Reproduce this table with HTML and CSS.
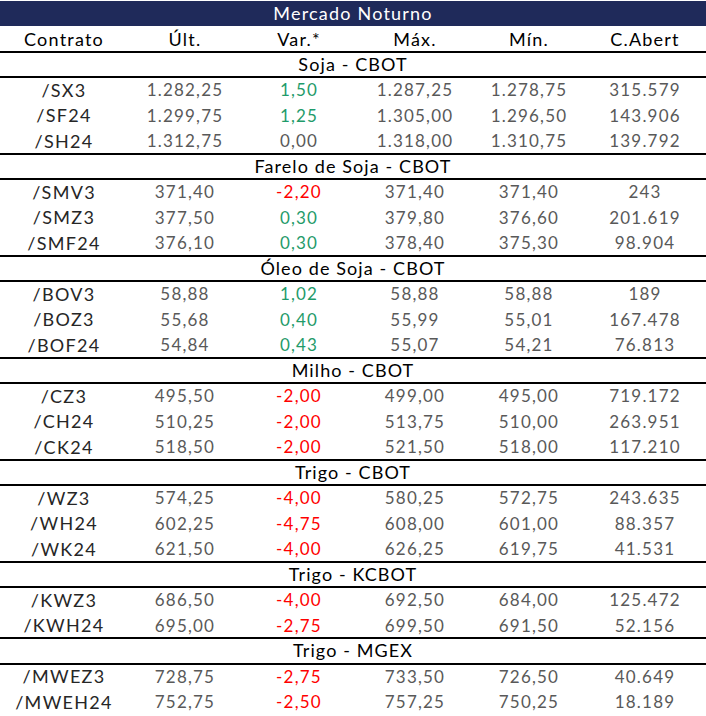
FILE: index.html
```html
<!DOCTYPE html>
<html lang="pt-BR">
<head>
<meta charset="utf-8">
<title>Mercado Noturno</title>
<link rel="stylesheet" href="styles.css">
</head>
<body>
<div class="board">
  <div class="title">Mercado Noturno</div>
  <div class="row head"><span>Contrato</span><span>Últ.</span><span>Var.*</span><span>Máx.</span><span>Mín.</span><span>C.Abert</span></div>

  <div class="group">Soja - CBOT</div>
  <div class="row"><span class="c">/SX3</span><span>1.282,25</span><span class="up">1,50</span><span>1.287,25</span><span>1.278,75</span><span>315.579</span></div>
  <div class="row"><span class="c">/SF24</span><span>1.299,75</span><span class="up">1,25</span><span>1.305,00</span><span>1.296,50</span><span>143.906</span></div>
  <div class="row"><span class="c">/SH24</span><span>1.312,75</span><span>0,00</span><span>1.318,00</span><span>1.310,75</span><span>139.792</span></div>

  <div class="group">Farelo de Soja - CBOT</div>
  <div class="row"><span class="c">/SMV3</span><span>371,40</span><span class="dn">-2,20</span><span>371,40</span><span>371,40</span><span>243</span></div>
  <div class="row"><span class="c">/SMZ3</span><span>377,50</span><span class="up">0,30</span><span>379,80</span><span>376,60</span><span>201.619</span></div>
  <div class="row"><span class="c">/SMF24</span><span>376,10</span><span class="up">0,30</span><span>378,40</span><span>375,30</span><span>98.904</span></div>

  <div class="group">Óleo de Soja - CBOT</div>
  <div class="row"><span class="c">/BOV3</span><span>58,88</span><span class="up">1,02</span><span>58,88</span><span>58,88</span><span>189</span></div>
  <div class="row"><span class="c">/BOZ3</span><span>55,68</span><span class="up">0,40</span><span>55,99</span><span>55,01</span><span>167.478</span></div>
  <div class="row"><span class="c">/BOF24</span><span>54,84</span><span class="up">0,43</span><span>55,07</span><span>54,21</span><span>76.813</span></div>

  <div class="group">Milho - CBOT</div>
  <div class="row"><span class="c">/CZ3</span><span>495,50</span><span class="dn">-2,00</span><span>499,00</span><span>495,00</span><span>719.172</span></div>
  <div class="row"><span class="c">/CH24</span><span>510,25</span><span class="dn">-2,00</span><span>513,75</span><span>510,00</span><span>263.951</span></div>
  <div class="row"><span class="c">/CK24</span><span>518,50</span><span class="dn">-2,00</span><span>521,50</span><span>518,00</span><span>117.210</span></div>

  <div class="group">Trigo - CBOT</div>
  <div class="row"><span class="c">/WZ3</span><span>574,25</span><span class="dn">-4,00</span><span>580,25</span><span>572,75</span><span>243.635</span></div>
  <div class="row"><span class="c">/WH24</span><span>602,25</span><span class="dn">-4,75</span><span>608,00</span><span>601,00</span><span>88.357</span></div>
  <div class="row"><span class="c">/WK24</span><span>621,50</span><span class="dn">-4,00</span><span>626,25</span><span>619,75</span><span>41.531</span></div>

  <div class="group">Trigo - KCBOT</div>
  <div class="row"><span class="c">/KWZ3</span><span>686,50</span><span class="dn">-4,00</span><span>692,50</span><span>684,00</span><span>125.472</span></div>
  <div class="row"><span class="c">/KWH24</span><span>695,00</span><span class="dn">-2,75</span><span>699,50</span><span>691,50</span><span>52.156</span></div>

  <div class="group">Trigo - MGEX</div>
  <div class="row"><span class="c">/MWEZ3</span><span>728,75</span><span class="dn">-2,75</span><span>733,50</span><span>726,50</span><span>40.649</span></div>
  <div class="row"><span class="c">/MWEH24</span><span>752,75</span><span class="dn">-2,50</span><span>757,25</span><span>750,25</span><span>18.189</span></div>
</div>
</body>
</html>
```
FILE: styles.css
```css
html, body {
  margin: 0;
  padding: 0;
  background: #ffffff;
}
.board {
  width: 706px;
  font-family: Lato, "Open Sans", sans-serif;
}
.title {
  height: 25px;
  margin-top: 1px;
  background: #1f2a5a;
  color: #ffffff;
  font-size: 18px;
  line-height: 25px;
  letter-spacing: 1.2px;
  text-align: center;
}
.row {
  display: grid;
  grid-template-columns: 128px 114px 114px 118px 110px 122px;
  height: 25.5px;
  align-items: center;
  font-size: 17px;
  color: #595959;
  letter-spacing: 1.2px;
}
.row span {
  text-align: center;
}
.row .c {
  color: #262626;
  font-size: 18px;
  letter-spacing: 1.3px;
}
.row.head {
  color: #000000;
  font-size: 18px;
  letter-spacing: 1.2px;
}
.up { color: #1f9b6a; }
.dn { color: #ff0000; }
.group {
  box-sizing: border-box;
  height: 27.5px;
  margin: -1px 0;
  border-top: 2px solid #000;
  border-bottom: 2px solid #000;
  text-align: center;
  font-size: 18px;
  line-height: 23.5px;
  color: #000;
  letter-spacing: 1.1px;
}
```
